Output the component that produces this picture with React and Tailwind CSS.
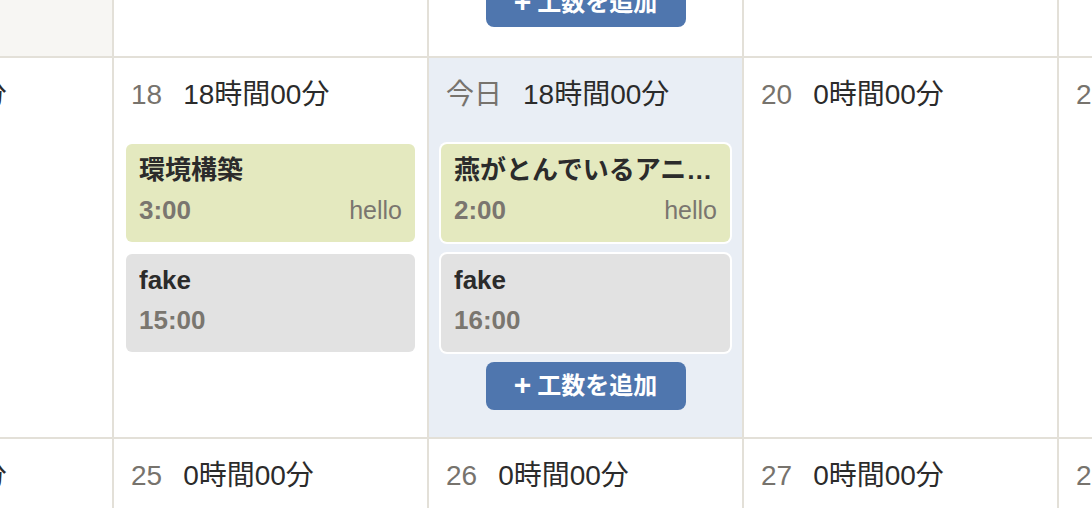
import React from "react";

const FONT = { fontFamily: '"Liberation Sans", "Noto Sans CJK JP", sans-serif' };

const weeks = [
  {
    days: [
      { label: "10", total: "0時間00分", shaded: true },
      { label: "11", total: "0時間00分" },
      { label: "12", total: "8時間00分", button: true },
      { label: "13", total: "0時間00分" },
      { label: "14", total: "0時間00分" },
    ],
  },
  {
    days: [
      { label: "17", total: "0時間00分" },
      {
        label: "18",
        total: "18時間00分",
        entries: [
          { title: "環境構築", time: "3:00", note: "hello", tone: "yellow" },
          { title: "fake", time: "15:00", tone: "gray" },
        ],
      },
      {
        label: "今日",
        total: "18時間00分",
        today: true,
        button: true,
        entries: [
          { title: "燕がとんでいるアニメーション", time: "2:00", note: "hello", tone: "yellow" },
          { title: "fake", time: "16:00", tone: "gray" },
        ],
      },
      { label: "20", total: "0時間00分" },
      { label: "21", total: "0時間00分" },
    ],
  },
  {
    days: [
      { label: "24", total: "0時間00分" },
      { label: "25", total: "0時間00分" },
      { label: "26", total: "0時間00分" },
      { label: "27", total: "0時間00分" },
      { label: "28", total: "0時間00分" },
    ],
  },
];

function AddButton() {
  return (
    <button className="w-[200px] h-[48px] shrink-0 rounded-lg bg-[#4f76ae] text-white text-[24px] font-bold flex items-center justify-center gap-[6px]">
      <span className="text-[30px] leading-none -mt-[3px]">+</span>
      <span>工数を追加</span>
    </button>
  );
}

function Entry({ e, today }) {
  const bg = e.tone === "yellow" ? "bg-[#e4e9bf]" : "bg-[#e2e2e2]";
  return (
    <div className={`${bg} rounded-md px-[13px] pt-[8px] pb-[14px] ${today ? "ring-2 ring-white" : ""}`}>
      <div className="text-[26px] leading-[36px] font-bold text-[#2b2b2b] truncate">{e.title}</div>
      <div className="mt-[4px] flex items-center justify-between leading-[36px]">
        <span className="text-[26px] font-bold text-[#7a766f]">{e.time}</span>
        {e.note && <span className="text-[25px] text-[#7a766f]">{e.note}</span>}
      </div>
    </div>
  );
}

const colW = (i) => (i === 0 ? "w-[307px]" : "w-[315px]");

function DayCell({ d, i }) {
  return (
    <div
      className={`${colW(i)} shrink-0 border-r-2 border-[#e3e0d8] flex flex-col ${
        d.today ? "bg-[#e9eef5]" : d.shaded ? "bg-[#f7f6f3]" : "bg-white"
      }`}
    >
      <div className="flex items-center pl-[17px] pt-[16px] h-[58px] text-[28px] leading-[40px] whitespace-nowrap">
        <span className="text-[#77736d]">{d.label}</span>
        <span className="ml-[21px] text-[#2b2b2b]">{d.total}</span>
      </div>
      {d.entries && (
        <div className="mt-[28px] mx-[12px] flex flex-col gap-[12px]">
          {d.entries.map((e, k) => (
            <Entry key={k} e={e} today={d.today} />
          ))}
        </div>
      )}
      {d.button && (
        <div className="flex justify-center mt-[10px]">
          <AddButton />
        </div>
      )}
      <div className="h-[27px]" />
    </div>
  );
}

export default function App() {
  return (
    <div className="w-[1092px] h-[508px] overflow-hidden bg-white" style={FONT}>
      <div className="-ml-[193px] flex flex-col">
        {/* previous week, mostly scrolled out of view */}
        <div className="flex h-[58px] border-b-2 border-[#e3e0d8]">
          {weeks[0].days.map((d, i) => (
            <div
              key={i}
              className={`${colW(i)} h-[56px] shrink-0 border-r-2 border-[#e3e0d8] flex flex-col justify-end ${
                d.shaded ? "bg-[#f7f6f3]" : "bg-white"
              }`}
            >
              {d.button && (
                <div className="flex justify-center mb-[29px]">
                  <AddButton />
                </div>
              )}
            </div>
          ))}
        </div>
        {weeks.slice(1).map((w, wi) => (
          <div key={wi} className="flex border-b-2 border-[#e3e0d8]">
            {w.days.map((d, i) => (
              <DayCell key={i} d={d} i={i} />
            ))}
          </div>
        ))}
      </div>
    </div>
  );
}
